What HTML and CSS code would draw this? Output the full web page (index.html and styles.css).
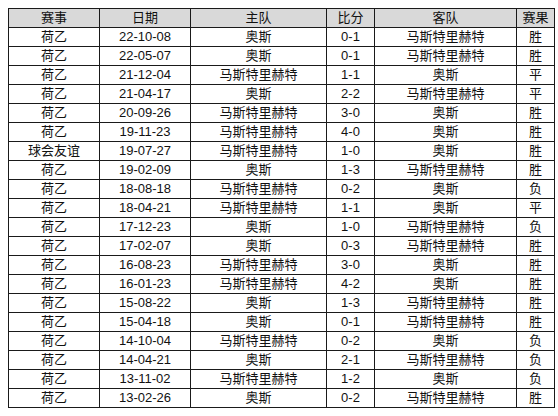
FILE: index.html
```html
<!DOCTYPE html>
<html lang="zh">
<head>
<meta charset="utf-8">
<link rel="stylesheet" href="styles.css">
</head>
<body>
<table class="results">
<colgroup>
<col class="c-comp"><col class="c-date"><col class="c-home"><col class="c-score"><col class="c-away"><col class="c-res">
</colgroup>
<thead>
<tr><th>赛事</th><th>日期</th><th>主队</th><th>比分</th><th>客队</th><th>赛果</th></tr>
</thead>
<tbody>
<tr><td>荷乙</td><td>22-10-08</td><td>奥斯</td><td>0-1</td><td>马斯特里赫特</td><td>胜</td></tr>
<tr><td>荷乙</td><td>22-05-07</td><td>奥斯</td><td>0-1</td><td>马斯特里赫特</td><td>胜</td></tr>
<tr><td>荷乙</td><td>21-12-04</td><td>马斯特里赫特</td><td>1-1</td><td>奥斯</td><td>平</td></tr>
<tr><td>荷乙</td><td>21-04-17</td><td>奥斯</td><td>2-2</td><td>马斯特里赫特</td><td>平</td></tr>
<tr><td>荷乙</td><td>20-09-26</td><td>马斯特里赫特</td><td>3-0</td><td>奥斯</td><td>胜</td></tr>
<tr><td>荷乙</td><td>19-11-23</td><td>马斯特里赫特</td><td>4-0</td><td>奥斯</td><td>胜</td></tr>
<tr><td>球会友谊</td><td>19-07-27</td><td>马斯特里赫特</td><td>1-0</td><td>奥斯</td><td>胜</td></tr>
<tr><td>荷乙</td><td>19-02-09</td><td>奥斯</td><td>1-3</td><td>马斯特里赫特</td><td>胜</td></tr>
<tr><td>荷乙</td><td>18-08-18</td><td>马斯特里赫特</td><td>0-2</td><td>奥斯</td><td>负</td></tr>
<tr><td>荷乙</td><td>18-04-21</td><td>马斯特里赫特</td><td>1-1</td><td>奥斯</td><td>平</td></tr>
<tr><td>荷乙</td><td>17-12-23</td><td>奥斯</td><td>1-0</td><td>马斯特里赫特</td><td>负</td></tr>
<tr><td>荷乙</td><td>17-02-07</td><td>奥斯</td><td>0-3</td><td>马斯特里赫特</td><td>胜</td></tr>
<tr><td>荷乙</td><td>16-08-23</td><td>马斯特里赫特</td><td>3-0</td><td>奥斯</td><td>胜</td></tr>
<tr><td>荷乙</td><td>16-01-23</td><td>马斯特里赫特</td><td>4-2</td><td>奥斯</td><td>胜</td></tr>
<tr><td>荷乙</td><td>15-08-22</td><td>奥斯</td><td>1-3</td><td>马斯特里赫特</td><td>胜</td></tr>
<tr><td>荷乙</td><td>15-04-18</td><td>奥斯</td><td>0-1</td><td>马斯特里赫特</td><td>胜</td></tr>
<tr><td>荷乙</td><td>14-10-04</td><td>马斯特里赫特</td><td>0-2</td><td>奥斯</td><td>负</td></tr>
<tr><td>荷乙</td><td>14-04-21</td><td>奥斯</td><td>2-1</td><td>马斯特里赫特</td><td>负</td></tr>
<tr><td>荷乙</td><td>13-11-02</td><td>马斯特里赫特</td><td>1-2</td><td>奥斯</td><td>负</td></tr>
<tr><td>荷乙</td><td>13-02-26</td><td>奥斯</td><td>0-2</td><td>马斯特里赫特</td><td>胜</td></tr>
</tbody>
</table>
</body>
</html>
```
FILE: styles.css
```css
html, body {
  margin: 0;
  padding: 0;
  background: #ffffff;
}
body {
  padding: 8px;
  font-family: "Liberation Sans", "Noto Sans CJK SC", sans-serif;
  font-size: 13px;
  color: #111;
}
.results {
  border-collapse: collapse;
  table-layout: fixed;
  width: 546px;
}
.c-comp { width: 91px; }
.c-date { width: 91px; }
.c-home { width: 136px; }
.c-score { width: 48px; }
.c-away { width: 142px; }
.c-res { width: 38px; }
.results th,
.results td {
  border: 1px solid #1a1a1a;
  height: 18px;
  padding: 0;
  text-align: center;
  vertical-align: middle;
  line-height: 18px;
  font-weight: normal;
  white-space: nowrap;
}
.results th {
  background: #d9d9d9;
}
```
